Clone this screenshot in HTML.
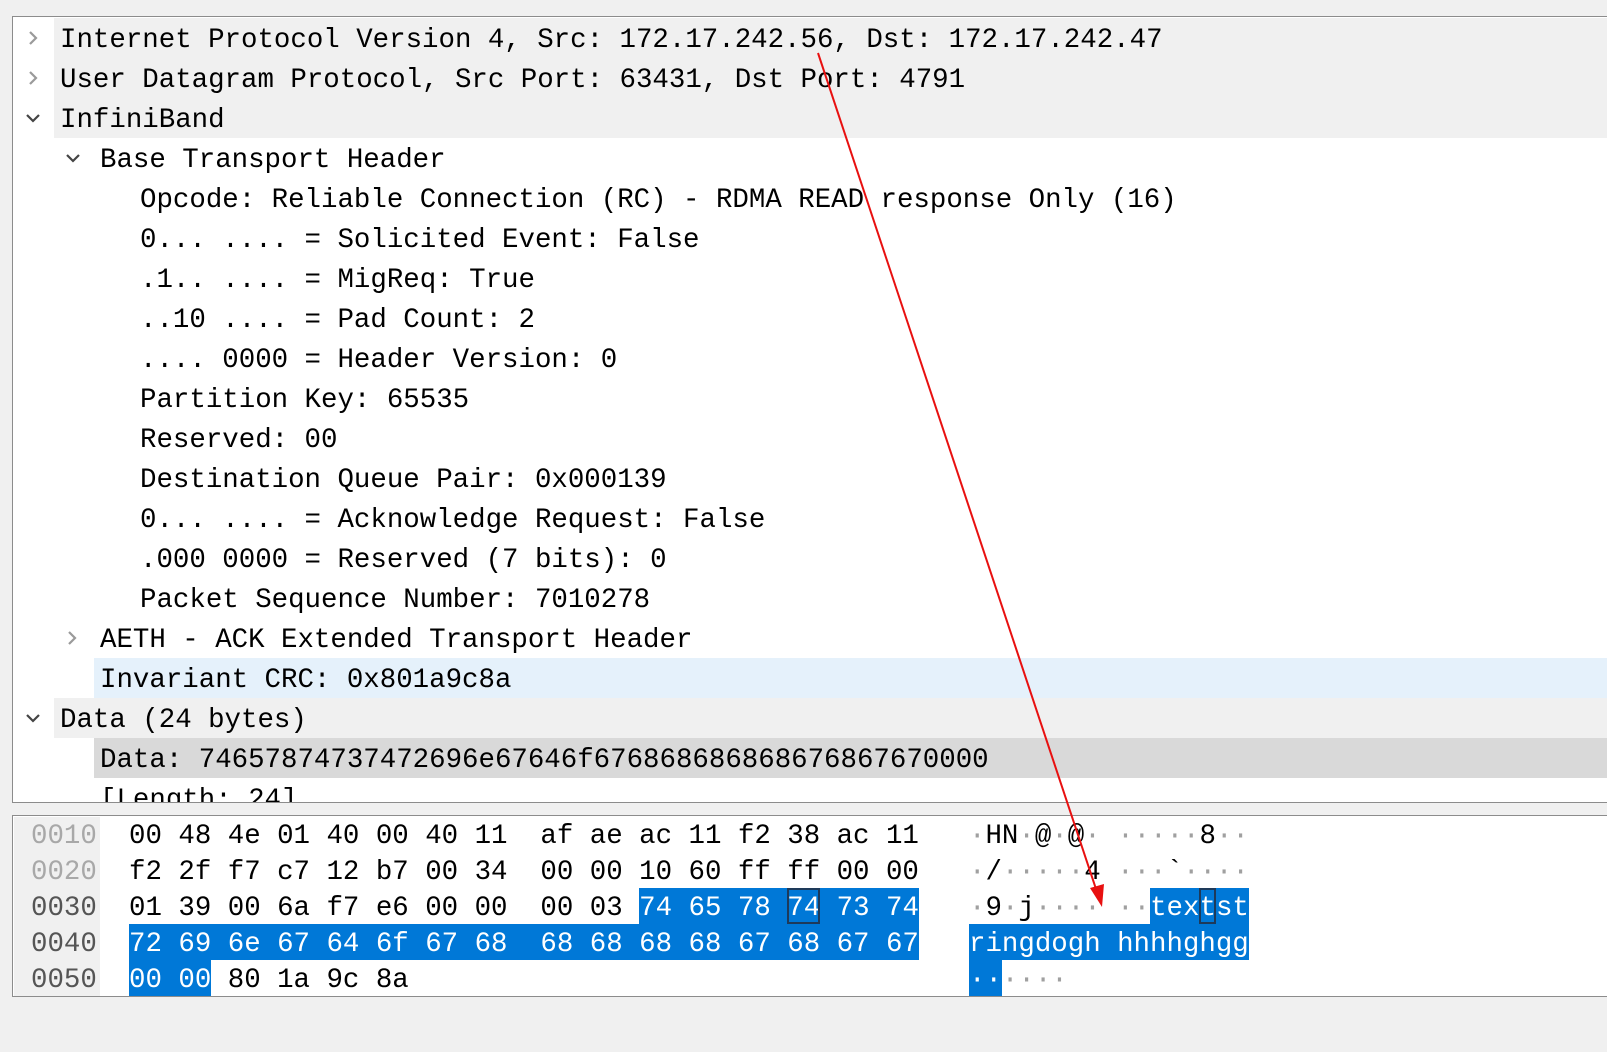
<!DOCTYPE html>
<html><head><meta charset="utf-8"><style>
*{margin:0;padding:0;box-sizing:border-box}
body{width:1607px;height:1052px;background:#f0f0f0;position:relative;overflow:hidden;font-family:"Liberation Mono",monospace;font-size:27.43px;color:#000}
.pane{position:absolute;background:#fff;border:1px solid #8c8c8c}
.row{position:absolute;height:40px;line-height:46px;white-space:pre}
.bg{position:absolute}
.hr{position:absolute;left:129px;height:36px;line-height:42px;white-space:pre}
.ar{position:absolute;left:969px;height:36px;line-height:42px;white-space:pre}
.off{position:absolute;left:31px;height:36px;line-height:42px}
.h{background:#0078d7;color:#fff;display:inline-block;height:36px;line-height:42px;vertical-align:top}
.d{color:#a0a0a0}
.h .d{color:#fff}
.bx{outline:2px solid #1e3a5a;outline-offset:-2px;display:inline-block;height:36px;vertical-align:top}
</style></head><body>
<div class="pane" style="left:12px;top:16px;width:1600px;height:787px;overflow:hidden">
  <div class="bg" style="left:41px;top:1px;width:1600px;height:120px;background:#f0f0f0"></div>
  <div class="bg" style="left:81px;top:641px;width:1600px;height:40px;background:#e5f1fb"></div>
  <div class="bg" style="left:41px;top:681px;width:1600px;height:40px;background:#f0f0f0"></div>
  <div class="bg" style="left:81px;top:721px;width:1600px;height:40px;background:#d9d9d9"></div>
</div>
<div style="position:absolute;left:0;top:0;width:1607px;height:802px;overflow:hidden">
<svg style="position:absolute;left:0;top:0" width="200" height="802">
<g fill="none" stroke="#9a9a9a" stroke-width="2.2">
<path d="M30 32 L36 38 L30 44"/><path d="M30 72 L36 78 L30 84"/>
<path d="M27 115 L33 121 L39 115" stroke="#444"/>
<path d="M67 155 L73 161 L79 155" stroke="#444"/>
<path d="M69 632 L75 638 L69 644"/>
<path d="M27 715 L33 721 L39 715" stroke="#444"/>
</g></svg>
<div class="row" style="left:60px;top:18px">Internet Protocol Version 4, Src: 172.17.242.56, Dst: 172.17.242.47</div>
<div class="row" style="left:60px;top:58px">User Datagram Protocol, Src Port: 63431, Dst Port: 4791</div>
<div class="row" style="left:60px;top:98px">InfiniBand</div>
<div class="row" style="left:100px;top:138px">Base Transport Header</div>
<div class="row" style="left:140px;top:178px">Opcode: Reliable Connection (RC) - RDMA READ response Only (16)</div>
<div class="row" style="left:140px;top:218px">0... .... = Solicited Event: False</div>
<div class="row" style="left:140px;top:258px">.1.. .... = MigReq: True</div>
<div class="row" style="left:140px;top:298px">..10 .... = Pad Count: 2</div>
<div class="row" style="left:140px;top:338px">.... 0000 = Header Version: 0</div>
<div class="row" style="left:140px;top:378px">Partition Key: 65535</div>
<div class="row" style="left:140px;top:418px">Reserved: 00</div>
<div class="row" style="left:140px;top:458px">Destination Queue Pair: 0x000139</div>
<div class="row" style="left:140px;top:498px">0... .... = Acknowledge Request: False</div>
<div class="row" style="left:140px;top:538px">.000 0000 = Reserved (7 bits): 0</div>
<div class="row" style="left:140px;top:578px">Packet Sequence Number: 7010278</div>
<div class="row" style="left:100px;top:618px">AETH - ACK Extended Transport Header</div>
<div class="row" style="left:100px;top:658px">Invariant CRC: 0x801a9c8a</div>
<div class="row" style="left:60px;top:698px">Data (24 bytes)</div>
<div class="row" style="left:100px;top:738px">Data: 74657874737472696e67646f676868686868676867670000</div>
<div class="row" style="left:100px;top:778px">[Length: 24]</div>
</div>

<div class="pane" style="left:12px;top:815px;width:1600px;height:182px">
  <div class="bg" style="left:1px;top:1px;width:86px;height:179px;background:#f0f0f0"></div>
</div>
<div class="off" style="top:816px;color:#a8a8a8">0010</div>
<div class="off" style="top:852px;color:#a8a8a8">0020</div>
<div class="off" style="top:888px;color:#555">0030</div>
<div class="off" style="top:924px;color:#555">0040</div>
<div class="off" style="top:960px;color:#555">0050</div>

<div class="hr" style="top:816px">00 48 4e 01 40 00 40 11  af ae ac 11 f2 38 ac 11</div>
<div class="hr" style="top:852px">f2 2f f7 c7 12 b7 00 34  00 00 10 60 ff ff 00 00</div>
<div class="hr" style="top:888px">01 39 00 6a f7 e6 00 00  00 03 <span class="h">74 65 78 <span class="bx">74</span> 73 74</span></div>
<div class="hr" style="top:924px"><span class="h">72 69 6e 67 64 6f 67 68  68 68 68 68 67 68 67 67</span></div>
<div class="hr" style="top:960px"><span class="h">00 00</span> 80 1a 9c 8a</div>

<div class="ar" style="top:816px"><span class="d">·</span>HN<span class="d">·</span>@<span class="d">·</span>@<span class="d">·</span> <span class="d">·····</span>8<span class="d">··</span></div>
<div class="ar" style="top:852px"><span class="d">·</span>/<span class="d">·····</span>4 <span class="d">···</span>`<span class="d">····</span></div>
<div class="ar" style="top:888px"><span class="d">·</span>9<span class="d">·</span>j<span class="d">····</span> <span class="d">··</span><span class="h">tex<span class="bx">t</span>st</span></div>
<div class="ar" style="top:924px"><span class="h">ringdogh hhhhghgg</span></div>
<div class="ar" style="top:960px"><span class="h"><span class="d">··</span></span><span class="d">····</span></div>

<svg style="position:absolute;left:0;top:0" width="1607" height="1052">
<line x1="818" y1="53" x2="1097" y2="892" stroke="#e81010" stroke-width="2"/>
<polygon points="1102,907 1090,888 1104,884" fill="#e81010"/>
</svg>
</body></html>
